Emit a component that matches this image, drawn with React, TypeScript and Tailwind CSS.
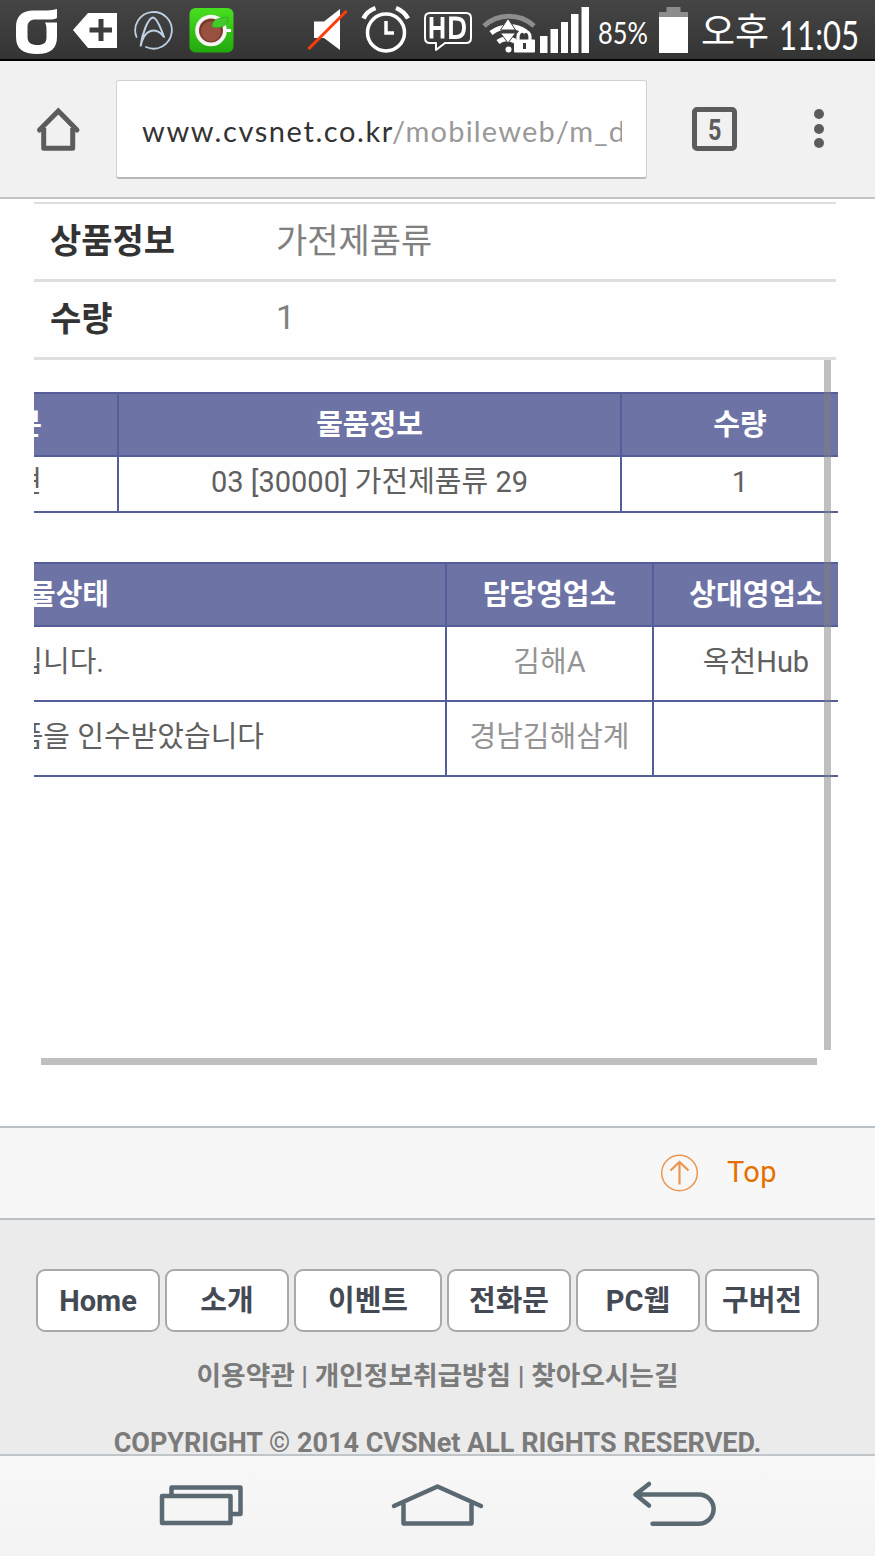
import type { ReactNode } from "react";

interface GlyphProps {
  x: number;
  width: number;
  className?: string;
  children: ReactNode;
}

// Status bar glyphs share one 61px tall coordinate space
function Glyph({ x, width, className, children }: GlyphProps) {
  return (
    <svg width={width} height={61} viewBox={`${x} 0 ${width} 61`} className={`block shrink-0 ${className ?? ""}`} fill="none">
      {children}
    </svg>
  );
}

function StatusBar() {
  return (
    <header className="flex h-[61px] border-b-2 border-black bg-linear-to-b from-[#454545] to-[#343434] text-white overflow-hidden">
      <Glyph x={16} width={42} className="ml-4">
        <path
          d="M57 9c-4 1.500-9 1.500-15 1.500h-8C21 10.500 16 17 16 27v10c0 12 7 17 21 17s20-6 20-17V22.500H45c1.500 3 1.500 5 1.500 9V37c0 6-3 8-9 8s-10-2-10-8V27c0-5 3-7.500 8-7.500h13c5 0 8-.5 8.500-2z"
          fill="#fff"
        />
      </Glyph>
      <Glyph x={73} width={44} className="ml-[15px]">
        <path d="M73 30 88 13h29v35H88z" fill="#fff" />
        <path d="M101 19v22M89.500 30h22.500" stroke="#3d3d3d" strokeWidth="5" />
      </Glyph>
      <Glyph x={133} width={40} className="ml-4">
        <path d="M136.500 37a18.300 18.300 0 1 1 9.500 10" stroke="#bdd0e4" strokeWidth="1.800" strokeLinecap="round" />
        <path d="M140.500 46.500C142 34 148 18 153 17.500c4 .5 8 11 11 19.500-8-11-20-8-23.500 9.500" stroke="#bdd0e4" strokeWidth="2" strokeLinejoin="round" />
      </Glyph>
      <Glyph x={189} width={45} className="ml-4">
        <defs>
          <linearGradient id="green" x1="0" y1="0" x2="0" y2="1">
            <stop stopColor="#49df20" />
            <stop offset="1" stopColor="#22a80d" />
          </linearGradient>
        </defs>
        <rect x="189.500" y="8" width="44" height="44.500" rx="6" fill="url(#green)" />
        <path d="M222 24l4 5h5v3h-5l-4 5z" fill="#fff" />
        <circle cx="211" cy="30.500" r="15.800" fill="#f5f5f5" />
        <circle cx="211" cy="30.500" r="12" fill="#7b3a2c" />
        <circle cx="211" cy="31.500" r="10" fill="#985040" />
        <path d="M212 27c0-8 6-9 16-10 0 8-5 12-16 10z" fill="#45c92c" stroke="#279f18" strokeWidth=".6" />
      </Glyph>
      <Glyph x={307} width={42} className="ml-[73px]">
        <path d="M314 21.500h10L340 9v41l-16-12h-10z" fill="#fff" />
        <path d="M308.500 49 346.500 11" stroke="#ff3c0c" strokeWidth="3" />
      </Glyph>
      <Glyph x={361} width={50} className="ml-3">
        <circle cx="386" cy="32.500" r="18.500" stroke="#fff" strokeWidth="3.500" />
        <path d="M386 21v12h8" stroke="#fff" strokeWidth="3.500" />
        <path d="M363.500 18.500C366 13 370 10 375.500 8M396 8c5 2 9 5 12 10.500" stroke="#fff" strokeWidth="4.500" />
      </Glyph>
      <Glyph x={424} width={49} className="ml-[13px]">
        <path d="M430 13h36q5 0 5 5v20q0 5-5 5h-21l-9 7v-7h-6q-5 0-5-5V18q0-5 5-5z" stroke="#fff" strokeWidth="2" strokeLinejoin="round" />
        <path d="M431.500 17v21.500M442.500 17v21.500M431.500 28h11M451 18.500h5c6 0 8 3 8 9s-2 9.500-8 9.500h-5z" stroke="#fff" strokeWidth="3.800" />
      </Glyph>
      <Glyph x={482} width={55} className="ml-[9px]">
        <path d="M484 26c14-13 36-13 50 0" stroke="#8d8d8d" strokeWidth="5" />
        <path d="M491 33c10-8 26-8 35-1M498 42c5-4 12-4 17-1" stroke="#fff" strokeWidth="5" />
        <path d="M508 18.500l-7.500 11.500h15zM500.500 33h15L508 43z" fill="#fff" stroke="#444" strokeWidth="1" />
        <circle cx="508.500" cy="49.500" r="3" fill="#fff" />
        <path d="M518 41v-4c0-8 12-8 12 0v4" stroke="#fff" strokeWidth="3.200" />
        <rect x="514" y="39.500" width="21" height="13" rx="1" fill="#fff" />
        <path d="M524.500 43v6" stroke="#3a3a3a" strokeWidth="3" />
      </Glyph>
      <Glyph x={540} width={50} className="ml-[3px]">
        <path d="M540 36h7.500v17H540zM550.500 29h7.500v24h-7.500zM561 22h7v31h-7zM571 14h7.500v39H571zM581.500 7h7.500v46h-7.500z" fill="#fff" />
      </Glyph>
      <span className="ml-2 w-[52px] origin-left scale-x-[.82] whitespace-nowrap pt-1 font-['Lato','Noto_Sans_CJK_KR',sans-serif] text-[31px] leading-[57px]">85%</span>
      <Glyph x={659} width={30} className="ml-[9px]">
        <path d="M666.500 7h14v5h7.500v5h-29v-5h7.500z" fill="#8d8d8d" />
        <path d="M659 17h29v36h-29z" fill="#fff" />
      </Glyph>
      <span className="ml-[12px] w-[70px] whitespace-nowrap font-['Noto_Sans_CJK_KR',sans-serif] text-[37px] leading-[59px]">오후</span>
      <span className="ml-[10px] origin-left scale-x-[.76] whitespace-nowrap pt-0.5 font-['Lato',sans-serif] text-[41px] leading-[66px]">11:05</span>
    </header>
  );
}

function Toolbar() {
  return (
    <div className="flex h-[138px] items-start border-b-2 border-[#c4c4c4] bg-[#f1f1f1]">
      <svg width="46" height="46" viewBox="0 0 46 46" className="ml-[35px] mt-[45px] shrink-0" fill="none" stroke="#5c5c5c" strokeWidth="5">
        <path d="M4.500 24 23.300 5 42 24" strokeLinecap="round" strokeLinejoin="miter" />
        <path d="M8.700 22v20.300h29V22" strokeLinejoin="round" />
      </svg>
      <div className="ml-[35px] mt-[19px] h-[99px] w-[531px] rounded-[3px] border border-b-2 border-[#d2d2d2] border-b-[#b8b8b8] bg-white px-[25px]">
        <p className="w-[480px] overflow-hidden whitespace-nowrap font-['Lato',sans-serif] text-[29px] leading-[100px] text-[#333]">
          <span className="inline-block w-[250px] tracking-[1.600px]">www.cvsnet.co.kr</span>
          <span className="tracking-[1.200px] text-[#999]">/mobileweb/m_d</span>
        </p>
      </div>
      <div className="ml-[45px] mt-[46px] flex h-[44px] w-[45px] items-center justify-center rounded-[5px] border-[5px] border-[#5c5c5c] font-['Roboto',sans-serif] text-[30px] font-bold text-[#5c5c5c]">
        <span className="scale-x-[.78]">5</span>
      </div>
      <div className="ml-[77px] mt-[48px] flex flex-col gap-[4.500px]">
        <i className="size-[10px] rounded-full bg-[#5c5c5c]" />
        <i className="size-[10px] rounded-full bg-[#5c5c5c]" />
        <i className="size-[10px] rounded-full bg-[#5c5c5c]" />
      </div>
    </div>
  );
}

function InfoRow({ label, value, valueClass }: { label: string; value: string; valueClass: string }) {
  return (
    <div className="flex h-[78px] border-b-3 border-[#dedede] pl-4 text-[34px] leading-[75px]">
      <dt className="w-[226px] font-bold text-[#333]">{label}</dt>
      <dd className={`text-[#808080] ${valueClass}`}>{value}</dd>
    </div>
  );
}

const items = { head: ["구분", "물품정보", "수량"], row: ["표현", "03 [30000] 가전제품류 29", "1"] };

function ItemTable() {
  return (
    <div className="h-[121px] w-[804px] overflow-hidden border-y-2 border-[#555e9b] text-center text-[29px]">
      <div className="grid h-[63px] grid-cols-[85px_503px_216px] border-b-2 border-[#555e9b] bg-[#6e73a6] font-bold leading-[62px] text-white">
        <div className="flex justify-end overflow-hidden border-r-2 border-[#555e9b] pr-[75px]">
          <span className="shrink-0">{items.head[0]}</span>
        </div>
        <div className="border-r-2 border-[#555e9b]">{items.head[1]}</div>
        <div className="pl-5">{items.head[2]}</div>
      </div>
      <div className="grid h-[54px] grid-cols-[85px_503px_216px] leading-[51px] text-[#606060]">
        <div className="flex justify-end overflow-hidden border-r-2 border-[#555e9b] pr-[75px]">
          <span className="shrink-0">{items.row[0]}</span>
        </div>
        <div className="border-r-2 border-[#555e9b]">{items.row[1]}</div>
        <div className="pl-5">{items.row[2]}</div>
      </div>
    </div>
  );
}

const history = [
  { status: "입니다.", pad: "pr-[341px]", office: "김해A", partner: "옥천Hub" },
  { status: "상품을 인수받았습니다", pad: "pr-[181px]", office: "경남김해삼계", partner: "" },
];

function StatusTable() {
  return (
    <div className="mt-[49px] w-[804px] border-t-2 border-[#555e9b] text-center text-[29px]">
      <div className="grid h-[63px] grid-cols-[413px_207px_184px] border-b-2 border-[#555e9b] bg-[#6e73a6] font-bold leading-[62px] text-white">
        <div className="flex justify-end overflow-hidden border-r-2 border-[#555e9b] pr-[336px]">
          <span className="shrink-0">화물상태</span>
        </div>
        <div className="border-r-2 border-[#555e9b]">담당영업소</div>
        <div className="pl-[20px]">상대영업소</div>
      </div>
      {history.map((h) => (
        <div key={h.office} className="grid h-[75px] grid-cols-[413px_207px_184px] border-b-2 border-[#555e9b] leading-[70px] text-[#606060]">
          <div className={`flex justify-end overflow-hidden border-r-2 border-[#555e9b] ${h.pad}`}>
            <span className="shrink-0 whitespace-nowrap">{h.status}</span>
          </div>
          <div className="border-r-2 border-[#555e9b] text-[#949494]">{h.office}</div>
          <div className="pl-[20px]">{h.partner}</div>
        </div>
      ))}
    </div>
  );
}

const links = [
  { label: "Home", width: "w-[124px]" },
  { label: "소개", width: "w-[124px]" },
  { label: "이벤트", width: "w-[148px]" },
  { label: "전화문", width: "w-[124px]" },
  { label: "PC웹", width: "w-[124px]" },
  { label: "구버전", width: "w-[114px]" },
];

function Footer() {
  return (
    <footer className="h-[234px] overflow-hidden bg-[#ebebeb] pt-[49px] text-center font-bold">
      <nav className="flex gap-[5px] pl-[36px]">
        {links.map((l) => (
          <a key={l.label} className={`h-[63px] rounded-[9px] border-2 border-[#a9a9a9] bg-white text-[29px] leading-[61px] text-[#444a54] ${l.width}`}>
            {l.label}
          </a>
        ))}
      </nav>
      <p className="mt-[25px] whitespace-nowrap text-[26.700px] leading-[38px] text-[#7b7b7b]">이용약관 | 개인정보취급방침 | 찾아오시는길</p>
      <p className="mt-[29px] whitespace-nowrap text-[27px] leading-[38px] text-[#7b7b7b]">COPYRIGHT © 2014 CVSNet ALL RIGHTS RESERVED.</p>
    </footer>
  );
}

function NavBar() {
  return (
    <div className="flex h-[102px] border-t-2 border-[#bfc5c9] bg-linear-to-b from-[#f8f8f8] to-[#f3f3f3]">
      <svg width="84" height="42" viewBox="159 1484 84 42" className="ml-[159px] mt-[28px]" fill="none" stroke="#5b6972" strokeWidth="4.500" strokeLinejoin="round">
        <path d="M171.500 1495v-7.500h69V1514h-10" />
        <path d="M162 1496h68.500v27H162z" />
      </svg>
      <svg width="94" height="46" viewBox="391 1481 94 46" className="ml-[148px] mt-[25px]" fill="none" stroke="#5b6972" strokeWidth="4.500" strokeLinecap="round" strokeLinejoin="round">
        <path d="M394 1506l43.500-19.500 43.500 19.500M403.500 1504v19.500h68V1504" />
      </svg>
      <svg width="86" height="48" viewBox="631 1480 86 48" className="ml-[146px] mt-[24px]" fill="none" stroke="#5b6972" strokeWidth="4.500" strokeLinecap="round" strokeLinejoin="round">
        <path d="M649 1484l-13.500 10.500 13.500 11M636 1494.500h63a14.500 14.500 0 0 1 0 29.200h-46.500" />
      </svg>
    </div>
  );
}

export default function App() {
  return (
    <div className="h-[1556px] w-[875px] overflow-hidden bg-[#fefefe] font-['Roboto','Noto_Sans_CJK_KR',sans-serif]">
      <StatusBar />
      <Toolbar />
      <main className="h-[927px] pl-[34px] pt-[3px]">
        <dl className="w-[802px] border-t-2 border-[#dedede]">
          <InfoRow label="상품정보" value="가전제품류" valueClass="" />
          <InfoRow label="수량" value="1" valueClass="leading-[71px]" />
        </dl>
        <div className="relative h-[706px] pt-[32px]">
          <ItemTable />
          <StatusTable />
          <div className="absolute left-[790px] top-0 h-[690px] w-[7px] bg-[#808080]/50" />
          <div className="absolute left-[7px] top-[698px] h-[7px] w-[776px] bg-[#808080]/50" />
        </div>
      </main>
      <div className="flex h-[94px] items-start border-y-2 border-[#b9c0c6] bg-[#f7f7f7]">
        <svg width="38" height="38" viewBox="0 0 38 38" className="ml-[660px] mt-[26px]" fill="none" stroke="#eb9650">
          <circle cx="19.500" cy="19" r="17.800" strokeWidth="1.500" />
          <path d="M19.500 8v22.500M10.500 16.500l9-8.500 9 8.500" strokeWidth="2.200" />
        </svg>
        <span className="ml-[29px] text-[29px] leading-[88px] tracking-[0.4px] text-[#e57000]">Top</span>
      </div>
      <Footer />
      <NavBar />
    </div>
  );
}
